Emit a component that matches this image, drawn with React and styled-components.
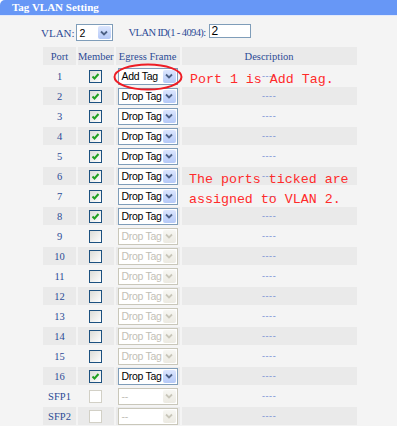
import React from 'react'
import styled, { createGlobalStyle } from 'styled-components'

const GlobalStyle = createGlobalStyle`
  html, body {
    margin: 0;
    padding: 0;
    background: #ffffff;
  }
`

const rows = [
  { port: '1', on: true, tag: 'Add Tag' },
  { port: '2', on: true, tag: 'Drop Tag' },
  { port: '3', on: true, tag: 'Drop Tag' },
  { port: '4', on: true, tag: 'Drop Tag' },
  { port: '5', on: true, tag: 'Drop Tag' },
  { port: '6', on: true, tag: 'Drop Tag' },
  { port: '7', on: true, tag: 'Drop Tag' },
  { port: '8', on: true, tag: 'Drop Tag' },
  { port: '9', on: false, tag: 'Drop Tag' },
  { port: '10', on: false, tag: 'Drop Tag' },
  { port: '11', on: false, tag: 'Drop Tag' },
  { port: '12', on: false, tag: 'Drop Tag' },
  { port: '13', on: false, tag: 'Drop Tag' },
  { port: '14', on: false, tag: 'Drop Tag' },
  { port: '15', on: false, tag: 'Drop Tag' },
  { port: '16', on: true, tag: 'Drop Tag' },
  { port: 'SFP1', on: false, tag: '--', locked: true },
  { port: 'SFP2', on: false, tag: '--', locked: true },
]

function Chevron({ off }) {
  return (
    <svg width="8" height="6" viewBox="0 0 8 6">
      <path d="M1 1.5 L4 4.5 L7 1.5" fill="none" stroke={off ? '#c9c7ba' : '#4d6185'} strokeWidth="1.8" />
    </svg>
  )
}

function Combo({ value, off, width }) {
  return (
    <Select off={off} width={width}>
      <SelectText off={off}>{value}</SelectText>
      <ArrowBtn off={off}><Chevron off={off} /></ArrowBtn>
    </Select>
  )
}

function Check({ on, locked }) {
  return (
    <Box locked={locked}>
      {on && (
        <svg width="9" height="9" viewBox="0 0 9 9">
          <path d="M1.5 4.5 L3.5 6.5 L7.5 2" fill="none" stroke="#21a121" strokeWidth="2" />
        </svg>
      )}
    </Box>
  )
}

function App() {
  return (
    <Page>
      <GlobalStyle />
      <TitleBar>Tag VLAN Setting</TitleBar>
      <FormRow>
        <Label>VLAN:</Label>
        <Combo value="2" width={37} />
        <Label narrow>VLAN ID(1 - 4094):</Label>
        <IdInput>2</IdInput>
      </FormRow>
      <TableWrap>
        <Table>
          <thead>
            <tr>
              <Th w={33}>Port</Th>
              <Th w={34}>Member</Th>
              <Th w={64}>Egress Frame</Th>
              <Th w={175}>Description</Th>
            </tr>
          </thead>
          <tbody>
            {rows.map((r, i) => (
              <Row key={r.port} shade={i % 2 === 1}>
                <PortCell>{r.port}</PortCell>
                <td><Center><Check on={r.on} locked={r.locked} /></Center></td>
                <td><Center><Combo value={r.tag} off={!r.on} width={60} /></Center></td>
                <DescCell>----</DescCell>
              </Row>
            ))}
          </tbody>
        </Table>
        <Ellipse width="72" height="30" viewBox="0 0 72 30">
          <ellipse cx="36" cy="15" rx="33.5" ry="12.5" fill="none" stroke="#ee1c24" strokeWidth="2" />
        </Ellipse>
        <Note top={25}>Port 1 is Add Tag.</Note>
        <Note top={125} left={148}>The ports ticked are<br />assigned to VLAN 2.</Note>
      </TableWrap>
    </Page>
  )
}

export default App

const Page = styled.div`
  min-height: 100vh;
  background: #f4f4f4;
  border-top-left-radius: 5px;
  overflow: hidden;
  font-family: "Liberation Serif", "Times New Roman", serif;
`

const TitleBar = styled.div`
  height: 15px;
  line-height: 15px;
  background: #6797f6;
  border-bottom: 1px solid #e2e9fb;
  color: #ffffff;
  font-weight: bold;
  font-size: 11px;
  padding-left: 12px;
`

const FormRow = styled.div`
  display: flex;
  align-items: center;
  padding: 8px 0 0 41px;
  height: 17px;
`

const Label = styled.span`
  font-size: ${p => (p.narrow ? '10.5px' : '11px')};
  letter-spacing: ${p => (p.narrow ? '-0.6px' : '0')};
  margin-left: ${p => (p.narrow ? '16px' : '0')};
  color: #2c4a96;
  margin-right: 1px;
`

const IdInput = styled.div`
  width: 38px;
  height: 12px;
  border: 1px solid #7f9db9;
  background: #ffffff;
  font-family: "Liberation Sans", Arial, sans-serif;
  font-size: 12px;
  line-height: 12px;
  padding-left: 2px;
  margin-left: 2px;
  margin-top: -3px;
`

const Select = styled.div`
  width: ${p => p.width - 2}px;
  height: 15px;
  border: 1px solid ${p => (p.off ? '#c9c7ba' : '#7f9db9')};
  background: #ffffff;
  display: flex;
  align-items: center;
  overflow: hidden;
`

const SelectText = styled.span`
  font-family: "Liberation Sans", Arial, sans-serif;
  font-size: 10.5px;
  letter-spacing: -0.3px;
  color: ${p => (p.off ? '#c2c0b6' : '#000000')};
  padding-left: 3px;
  white-space: nowrap;
  flex: 1;
  overflow: hidden;
`

const ArrowBtn = styled.span`
  width: 13px;
  height: 13px;
  margin-right: 1px;
  border-radius: 2px;
  display: flex;
  align-items: center;
  justify-content: center;
  flex: none;
  background: ${p => (p.off ? 'linear-gradient(#f7f7f3, #eceae2)' : 'linear-gradient(#dce6fe, #b5c9f7)')};
`

const TableWrap = styled.div`
  position: relative;
  margin: 4px 0 0 41px;
  width: 330px;
`

const Table = styled.table`
  border-collapse: separate;
  border-spacing: 2px;
  table-layout: fixed;
  td {
    padding: 0;
    height: 18px;
  }
`

const Th = styled.th`
  width: ${p => p.w}px;
  height: 18px;
  padding: 0;
  background: #eaeaea;
  color: #2c4a96;
  font-weight: normal;
  font-size: 10.5px;
  text-align: center;
  white-space: nowrap;
`

const Row = styled.tr`
  td {
    background: ${p => (p.shade ? '#eaeaea' : '#f4f4f4')};
  }
`

const PortCell = styled.td`
  text-align: center;
  font-size: 10.5px;
  color: #2c4a96;
`

const DescCell = styled.td`
  text-align: center;
  font-size: 9px;
  letter-spacing: 0.6px;
  color: #6a86d2;
`

const Center = styled.div`
  display: flex;
  align-items: center;
  justify-content: center;
  height: 18px;
`

const Box = styled.span`
  width: 11px;
  height: 11px;
  border: 1px solid ${p => (p.locked ? '#d2d0c6' : '#1c5180')};
  background: ${p => (p.locked ? '#ffffff' : 'linear-gradient(135deg, #dcdcd7, #ffffff)')};
  display: flex;
  align-items: center;
  justify-content: center;
`

const Ellipse = styled.svg`
  position: absolute;
  left: 71px;
  top: 17px;
`

const Note = styled.div`
  position: absolute;
  top: ${p => p.top}px;
  left: ${p => p.left || 149}px;
  font-family: "Liberation Mono", "Courier New", monospace;
  font-size: 13.3px;
  line-height: 20px;
  color: #ff2a2a;
  white-space: nowrap;
`
